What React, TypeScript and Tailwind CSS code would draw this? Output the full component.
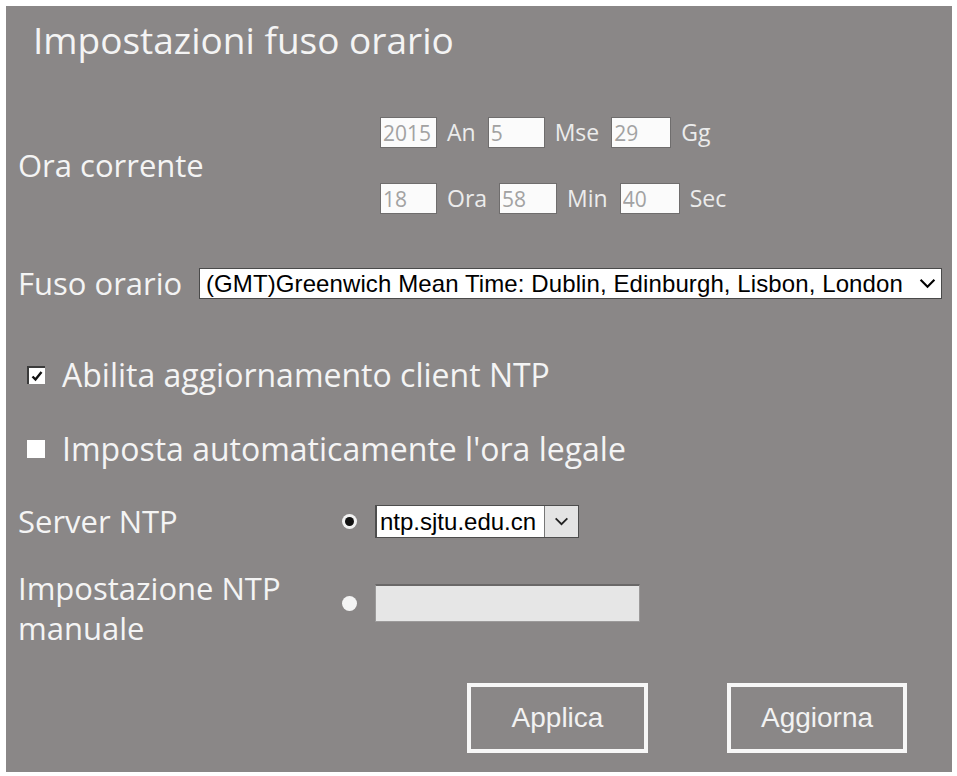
import { useState } from "react";

const sans = "font-['Open_Sans','Noto_Sans',sans-serif]";
const arial = "font-['Liberation_Sans',Arial,sans-serif]";

function Chevron({ className }: { className?: string }) {
  return (
    <svg viewBox="0 0 16 10" className={className} fill="none">
      <path d="M1.5 1.5 8 8l6.5-6.5" stroke="currentColor" strokeWidth="2" />
    </svg>
  );
}

function NumBox({ value, width }: { value: string; width: string }) {
  return (
    <input
      readOnly
      value={value}
      className={`${width} ${sans} h-[31px] border border-[#6f6d6d] bg-[#fbfbfb] px-[2px] text-[21px] leading-none text-[#a2a2a2] outline-none`}
    />
  );
}

function Unit({ children }: { children: string }) {
  return (
    <span className={`${sans} ml-[10px] mr-[12px] text-[23px] leading-none text-[#ececec]`}>
      {children}
    </span>
  );
}

export default function App() {
  const [ntp, setNtp] = useState(true);
  const [dst, setDst] = useState(false);
  const [mode, setMode] = useState<"server" | "manual">("server");

  return (
    <div className="min-h-screen bg-white pl-[6px] pt-[6px]">
      <div className={`${sans} h-[766px] w-[946px] bg-[#8a8787] pt-[15px] text-[#f4f4f4]`}>
        <h1 className="pl-[27px] text-[37px] leading-none">Impostazioni fuso orario</h1>

        {/* current date / time */}
        <div className="mt-[59px] flex items-center">
          <div className="w-[374px] pl-[12px] text-[31px] leading-none">Ora corrente</div>
          <div className="flex flex-col gap-[35px]">
            <div className="flex h-[31px] items-center">
              <NumBox value="2015" width="w-[57px]" />
              <Unit>An</Unit>
              <NumBox value="5" width="w-[57px]" />
              <Unit>Mse</Unit>
              <NumBox value="29" width="w-[60px]" />
              <Unit>Gg</Unit>
            </div>
            <div className="flex h-[31px] items-center">
              <NumBox value="18" width="w-[57px]" />
              <Unit>Ora</Unit>
              <NumBox value="58" width="w-[58px]" />
              <Unit>Min</Unit>
              <NumBox value="40" width="w-[60px]" />
              <Unit>Sec</Unit>
            </div>
          </div>
        </div>

        {/* time zone */}
        <div className="mt-[54px] flex h-[31px] items-center">
          <div className="w-[193px] pl-[12px] text-[31px] leading-none">Fuso orario</div>
          <div className="flex h-[31px] w-[743px] items-center justify-between border border-[#4a4a4a] bg-white pl-[6px] pr-[5px] text-black">
            <span className={`${arial} text-[24px] leading-none tracking-[0.1px]`}>
              (GMT)Greenwich Mean Time: Dublin, Edinburgh, Lisbon, London
            </span>
            <Chevron className="h-[11px] w-[17px]" />
          </div>
        </div>

        {/* options */}
        <label className="mt-[61px] flex h-[30px] cursor-pointer items-center pl-[21px]">
          <input type="checkbox" checked={ntp} onChange={() => setNtp(!ntp)} className="sr-only" />
          <span className="flex h-[18px] w-[18px] items-center justify-center border-l-2 border-t-2 border-[#3b3b3b] bg-white">
            {ntp && (
              <svg viewBox="0 0 12 12" className="h-[12px] w-[12px]" fill="none">
                <path d="M1.5 6.5 4.5 9.5 10.5 2" stroke="#111" strokeWidth="2.4" />
              </svg>
            )}
          </span>
          <span className="ml-[17px] text-[32px] leading-none">Abilita aggiornamento client NTP</span>
        </label>

        <label className="mt-[44px] flex h-[30px] cursor-pointer items-center pl-[21px]">
          <input type="checkbox" checked={dst} onChange={() => setDst(!dst)} className="sr-only" />
          <span className="h-[18px] w-[18px] bg-white" />
          <span className="ml-[17px] text-[32px] leading-none">Imposta automaticamente l'ora legale</span>
        </label>

        {/* ntp server */}
        <div className="mt-[41px] flex h-[32px] items-center">
          <div className="w-[336px] pl-[12px] text-[31px] leading-none">Server NTP</div>
          <button
            onClick={() => setMode("server")}
            className="flex h-[15px] w-[15px] items-center justify-center rounded-full bg-[#f2f2f2]"
          >
            {mode === "server" && <span className="h-[9px] w-[9px] rounded-full bg-[#111]" />}
          </button>
          <div className="ml-[18px] flex h-[33px] w-[204px] border border-l-2 border-[#4d4d4d] bg-white">
            <span className={`${arial} flex-1 pl-[3px] text-[24px] leading-[31px] text-black`}>ntp.sjtu.edu.cn</span>
            <span className="flex w-[34px] items-center justify-center border-l border-[#777] bg-[#e4e4e4] text-[#222]">
              <Chevron className="h-[9px] w-[15px]" />
            </span>
          </div>
        </div>

        <div className="mt-[31px] flex items-start">
          <div className="w-[336px] pl-[12px] text-[31px] leading-[40px]">
            Impostazione NTP
            <br />
            manuale
          </div>
          <div className="mt-[16px] flex h-[38px] items-center">
            <button
              onClick={() => setMode("manual")}
              className="flex h-[15px] w-[15px] items-center justify-center rounded-full bg-[#f4f4f4]"
            >
              {mode === "manual" && <span className="h-[9px] w-[9px] rounded-full bg-[#111]" />}
            </button>
            <input
              readOnly
              className="ml-[18px] h-[38px] w-[265px] border border-t-2 border-[#9c9a9a] border-t-[#6a6868] bg-[#e6e6e6] outline-none"
            />
          </div>
        </div>

        {/* actions */}
        <div className={`${arial} mt-[35px] flex justify-end gap-[79px] pr-[45px]`}>
          <button className="h-[70px] w-[181px] border-4 border-[#f7f7f7] text-[28px] text-[#f2f2f2]">
            Applica
          </button>
          <button className="h-[70px] w-[180px] border-4 border-[#f7f7f7] text-[28px] text-[#f2f2f2]">
            Aggiorna
          </button>
        </div>
      </div>
    </div>
  );
}
